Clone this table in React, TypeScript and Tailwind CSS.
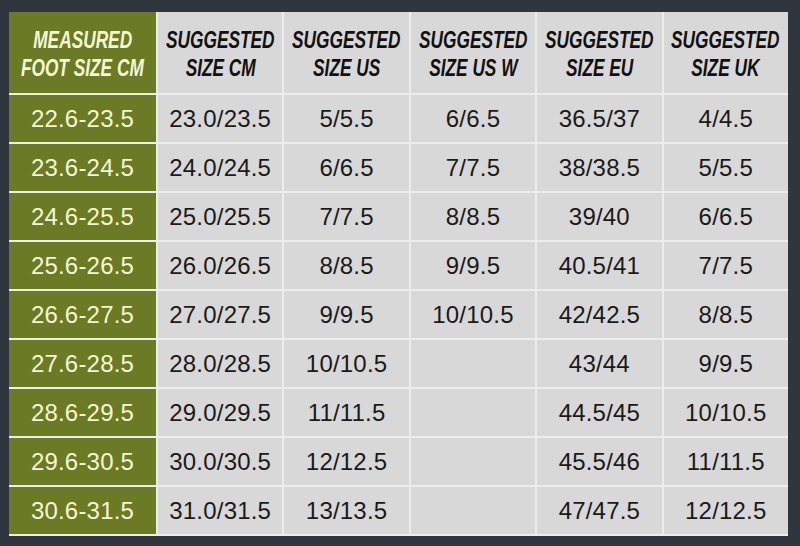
const headers = [
  ["MEASURED", "FOOT SIZE CM"],
  ["SUGGESTED", "SIZE CM"],
  ["SUGGESTED", "SIZE US"],
  ["SUGGESTED", "SIZE US W"],
  ["SUGGESTED", "SIZE EU"],
  ["SUGGESTED", "SIZE UK"],
];

const rows = [
  ["22.6-23.5", "23.0/23.5", "5/5.5", "6/6.5", "36.5/37", "4/4.5"],
  ["23.6-24.5", "24.0/24.5", "6/6.5", "7/7.5", "38/38.5", "5/5.5"],
  ["24.6-25.5", "25.0/25.5", "7/7.5", "8/8.5", "39/40", "6/6.5"],
  ["25.6-26.5", "26.0/26.5", "8/8.5", "9/9.5", "40.5/41", "7/7.5"],
  ["26.6-27.5", "27.0/27.5", "9/9.5", "10/10.5", "42/42.5", "8/8.5"],
  ["27.6-28.5", "28.0/28.5", "10/10.5", "", "43/44", "9/9.5"],
  ["28.6-29.5", "29.0/29.5", "11/11.5", "", "44.5/45", "10/10.5"],
  ["29.6-30.5", "30.0/30.5", "12/12.5", "", "45.5/46", "11/11.5"],
  ["30.6-31.5", "31.0/31.5", "13/13.5", "", "47/47.5", "12/12.5"],
];

export default function App() {
  return (
    <div className="w-[800px] h-[546px] bg-[#31353d] pt-[12px] pl-[9px] font-['Liberation_Sans',sans-serif]">
      <div className="w-[779px] grid grid-cols-[147px_repeat(5,minmax(0,1fr))] grid-rows-[81px_repeat(9,47px)] gap-[2px] pb-[2px] bg-[#ededed]">
        {headers.map((h, i) => (
          <div
            key={i}
            className={`flex flex-col items-center justify-center pt-[2px] italic font-bold text-[24px] leading-[28px] overflow-hidden ${
              i === 0 ? "bg-[#6b7a25] text-[#f4f6d4]" : "bg-[#d8d8d8] text-[#111111]"
            }`}
          >
            <span className="inline-block whitespace-nowrap scale-x-[0.72]">{h[0]}</span>
            <span className="inline-block whitespace-nowrap scale-x-[0.72]">{h[1]}</span>
          </div>
        ))}
        {rows.map((r, ri) =>
          r.map((c, ci) => (
            <div
              key={`${ri}-${ci}`}
              className={`flex items-center justify-center text-[24px] tracking-[0.2px] ${
                ci === 0 ? "bg-[#6b7a25] text-[#f4f6d4]" : "bg-[#d8d8d8] text-[#1a1a1a]"
              }`}
            >
              {c}
            </div>
          ))
        )}
      </div>
    </div>
  );
}
